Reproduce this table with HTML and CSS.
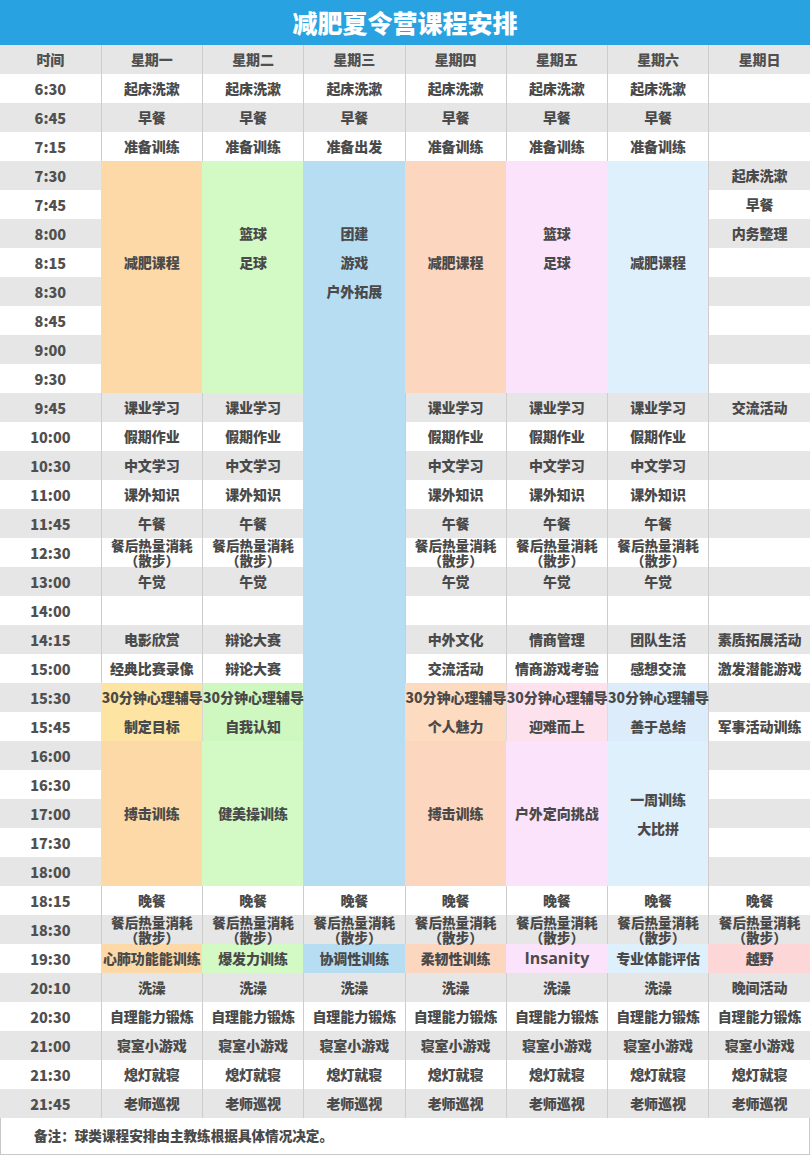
FILE: index.html
```html
<!DOCTYPE html>
<html lang="zh-CN">
<head>
<meta charset="utf-8">
<title>减肥夏令营课程安排</title>
<link rel="stylesheet" href="styles.css">
</head>
<body>
<div class="page">
  <h1 class="title">减肥夏令营课程安排</h1>
  <table class="schedule">
    <thead>
      <tr><th>时间</th><th>星期一</th><th>星期二</th><th>星期三</th><th>星期四</th><th>星期五</th><th>星期六</th><th>星期日</th></tr>
    </thead>
    <tbody>
      <tr><td class="time">6:30</td><td>起床洗漱</td><td>起床洗漱</td><td>起床洗漱</td><td>起床洗漱</td><td>起床洗漱</td><td>起床洗漱</td><td></td></tr>
      <tr><td class="time">6:45</td><td>早餐</td><td>早餐</td><td>早餐</td><td>早餐</td><td>早餐</td><td>早餐</td><td></td></tr>
      <tr><td class="time">7:15</td><td>准备训练</td><td>准备训练</td><td>准备出发</td><td>准备训练</td><td>准备训练</td><td>准备训练</td><td></td></tr>
      <tr><td class="time">7:30</td>
        <td rowspan="8" class="block c-orange top3"><div class="ln">减肥课程</div></td>
        <td rowspan="8" class="block c-green top2"><div class="ln">篮球</div><div class="ln">足球</div></td>
        <td rowspan="25" class="block c-blue top2"><div class="ln">团建</div><div class="ln">游戏</div><div class="ln">户外拓展</div></td>
        <td rowspan="8" class="block c-salmon top3"><div class="ln">减肥课程</div></td>
        <td rowspan="8" class="block c-pink top2"><div class="ln">篮球</div><div class="ln">足球</div></td>
        <td rowspan="8" class="block c-lblue top3"><div class="ln">减肥课程</div></td>
        <td>起床洗漱</td></tr>
      <tr><td class="time">7:45</td><td>早餐</td></tr>
      <tr><td class="time">8:00</td><td>内务整理</td></tr>
      <tr><td class="time">8:15</td><td></td></tr>
      <tr><td class="time">8:30</td><td></td></tr>
      <tr><td class="time">8:45</td><td></td></tr>
      <tr><td class="time">9:00</td><td></td></tr>
      <tr><td class="time">9:30</td><td></td></tr>
      <tr><td class="time">9:45</td><td>课业学习</td><td>课业学习</td><td>课业学习</td><td>课业学习</td><td>课业学习</td><td>交流活动</td></tr>
      <tr><td class="time">10:00</td><td>假期作业</td><td>假期作业</td><td>假期作业</td><td>假期作业</td><td>假期作业</td><td></td></tr>
      <tr><td class="time">10:30</td><td>中文学习</td><td>中文学习</td><td>中文学习</td><td>中文学习</td><td>中文学习</td><td></td></tr>
      <tr><td class="time">11:00</td><td>课外知识</td><td>课外知识</td><td>课外知识</td><td>课外知识</td><td>课外知识</td><td></td></tr>
      <tr><td class="time">11:45</td><td>午餐</td><td>午餐</td><td>午餐</td><td>午餐</td><td>午餐</td><td></td></tr>
      <tr><td class="time">12:30</td><td class="two"><div class="sub">餐后热量消耗</div><div class="sub">（散步）</div></td><td class="two"><div class="sub">餐后热量消耗</div><div class="sub">（散步）</div></td><td class="two"><div class="sub">餐后热量消耗</div><div class="sub">（散步）</div></td><td class="two"><div class="sub">餐后热量消耗</div><div class="sub">（散步）</div></td><td class="two"><div class="sub">餐后热量消耗</div><div class="sub">（散步）</div></td><td></td></tr>
      <tr><td class="time">13:00</td><td>午觉</td><td>午觉</td><td>午觉</td><td>午觉</td><td>午觉</td><td></td></tr>
      <tr><td class="time">14:00</td><td></td><td></td><td></td><td></td><td></td><td></td></tr>
      <tr><td class="time">14:15</td><td>电影欣赏</td><td>辩论大赛</td><td>中外文化</td><td>情商管理</td><td>团队生活</td><td>素质拓展活动</td></tr>
      <tr><td class="time">15:00</td><td>经典比赛录像</td><td>辩论大赛</td><td>交流活动</td><td>情商游戏考验</td><td>感想交流</td><td>激发潜能游戏</td></tr>
      <tr><td class="time">15:30</td>
        <td rowspan="2" class="block c-yellow"><div class="ln">30分钟心理辅导</div><div class="ln">制定目标</div></td>
        <td rowspan="2" class="block c-green2"><div class="ln">30分钟心理辅导</div><div class="ln">自我认知</div></td>
        <td rowspan="2" class="block c-salmon2"><div class="ln">30分钟心理辅导</div><div class="ln">个人魅力</div></td>
        <td rowspan="2" class="block c-pink2"><div class="ln">30分钟心理辅导</div><div class="ln">迎难而上</div></td>
        <td rowspan="2" class="block c-lblue2"><div class="ln">30分钟心理辅导</div><div class="ln">善于总结</div></td>
        <td></td></tr>
      <tr><td class="time">15:45</td><td>军事活动训练</td></tr>
      <tr><td class="time">16:00</td>
        <td rowspan="5" class="block c-orange">搏击训练</td>
        <td rowspan="5" class="block c-green">健美操训练</td>
        <td rowspan="5" class="block c-salmon">搏击训练</td>
        <td rowspan="5" class="block c-pink">户外定向挑战</td>
        <td rowspan="5" class="block c-lblue"><div class="ln">一周训练</div><div class="ln">大比拼</div></td>
        <td></td></tr>
      <tr><td class="time">16:30</td><td></td></tr>
      <tr><td class="time">17:00</td><td></td></tr>
      <tr><td class="time">17:30</td><td></td></tr>
      <tr><td class="time">18:00</td><td></td></tr>
      <tr><td class="time">18:15</td><td>晚餐</td><td>晚餐</td><td>晚餐</td><td>晚餐</td><td>晚餐</td><td>晚餐</td><td>晚餐</td></tr>
      <tr><td class="time">18:30</td><td class="two"><div class="sub">餐后热量消耗</div><div class="sub">（散步）</div></td><td class="two"><div class="sub">餐后热量消耗</div><div class="sub">（散步）</div></td><td class="two"><div class="sub">餐后热量消耗</div><div class="sub">（散步）</div></td><td class="two"><div class="sub">餐后热量消耗</div><div class="sub">（散步）</div></td><td class="two"><div class="sub">餐后热量消耗</div><div class="sub">（散步）</div></td><td class="two"><div class="sub">餐后热量消耗</div><div class="sub">（散步）</div></td><td class="two"><div class="sub">餐后热量消耗</div><div class="sub">（散步）</div></td></tr>
      <tr><td class="time">19:30</td><td class="c-orange">心肺功能能训练</td><td class="c-green">爆发力训练</td><td class="c-blue">协调性训练</td><td class="c-salmon">柔韧性训练</td><td class="c-pink latin">Insanity</td><td class="c-lblue">专业体能评估</td><td class="c-red">越野</td></tr>
      <tr><td class="time">20:10</td><td>洗澡</td><td>洗澡</td><td>洗澡</td><td>洗澡</td><td>洗澡</td><td>洗澡</td><td>晚间活动</td></tr>
      <tr><td class="time">20:30</td><td>自理能力锻炼</td><td>自理能力锻炼</td><td>自理能力锻炼</td><td>自理能力锻炼</td><td>自理能力锻炼</td><td>自理能力锻炼</td><td>自理能力锻炼</td></tr>
      <tr><td class="time">21:00</td><td>寝室小游戏</td><td>寝室小游戏</td><td>寝室小游戏</td><td>寝室小游戏</td><td>寝室小游戏</td><td>寝室小游戏</td><td>寝室小游戏</td></tr>
      <tr><td class="time">21:30</td><td>熄灯就寝</td><td>熄灯就寝</td><td>熄灯就寝</td><td>熄灯就寝</td><td>熄灯就寝</td><td>熄灯就寝</td><td>熄灯就寝</td></tr>
      <tr><td class="time">21:45</td><td>老师巡视</td><td>老师巡视</td><td>老师巡视</td><td>老师巡视</td><td>老师巡视</td><td>老师巡视</td><td>老师巡视</td></tr>
    </tbody>
  </table>
  <p class="note">备注：球类课程安排由主教练根据具体情况决定。</p>
</div>
</body>
</html>
```

FILE: styles.css
```css
html, body {
  margin: 0;
  padding: 0;
  background: #ffffff;
}

.page {
  width: 810px;
  font-family: "Noto Sans CJK SC", "Noto Sans", sans-serif;
  color: #4a4a4a;
}

.title {
  margin: 0;
  height: 45px;
  line-height: 45px;
  background: #29a2e1;
  color: #ffffff;
  text-align: center;
  font-size: 25px;
  font-weight: 900;
}

.schedule {
  width: 810px;
  table-layout: fixed;
  border-collapse: collapse;
  border-spacing: 0;
}

.schedule th,
.schedule td {
  height: 29px;
  padding: 0;
  text-align: center;
  vertical-align: middle;
  font-size: 14px;
  line-height: 29px;
  font-weight: 900;
  white-space: nowrap;
  border-left: 1px solid #cdcdcd;
}

.schedule th:first-child,
.schedule td.time {
  border-left: none;
}

.schedule thead th {
  background: #e6e6e6;
  color: #505050;
}

.schedule tbody tr:nth-child(even) td {
  background: #e6e6e6;
}

.schedule td.time {
  font-size: 14.5px;
  color: #505050;
}

.sub {
  height: 14.5px;
  line-height: 14.5px;
  font-size: 13.6px;
}

.schedule td.block {
  height: auto;
}

.schedule td.top2,
.schedule td.top3 {
  vertical-align: top;
}

.schedule td.top2 {
  padding-top: 58px;
}

.schedule td.top3 {
  padding-top: 87px;
}

.ln {
  height: 29px;
  line-height: 29px;
}

.schedule td.latin {
  font-family: "Open Sans", "Noto Sans", sans-serif;
  font-size: 16px;
  font-weight: 700;
}

.schedule tbody tr td.c-orange { background: #fdd9a8; border-left-color: #fdd9a8; }
.schedule tbody tr td.c-green { background: #d3f9c4; border-left-color: #d3f9c4; }
.schedule tbody tr td.c-blue { background: #b7ddf3; border-left-color: #b7ddf3; }
.schedule tbody tr td.c-salmon { background: #fdd6bf; border-left-color: #fdd6bf; }
.schedule tbody tr td.c-pink { background: #fbe3fb; border-left-color: #fbe3fb; }
.schedule tbody tr td.c-lblue { background: #def0fb; border-left-color: #def0fb; }
.schedule tbody tr td.c-red { background: #fdd7d7; border-left-color: #fdd7d7; }
.schedule tbody tr td.c-yellow { background: #fee4a2; border-left-color: #fee4a2; }
.schedule tbody tr td.c-green2 { background: #cff7c0; border-left-color: #d8d8d0; }
.schedule tbody tr td.c-salmon2 { background: #fddbc1; border-left-color: #fddbc1; }
.schedule tbody tr td.c-pink2 { background: #fde2ee; border-left-color: #e0d8dc; }
.schedule tbody tr td.c-lblue2 { background: #dcecfb; border-left-color: #d8dde2; }

.note {
  margin: 0;
  height: 37px;
  line-height: 34px;
  padding-left: 33px;
  font-size: 13.6px;
  font-weight: 900;
  color: #4a4a4a;
  border: 1px solid #c8c8c8;
  border-top: none;
  box-sizing: border-box;
}
```
